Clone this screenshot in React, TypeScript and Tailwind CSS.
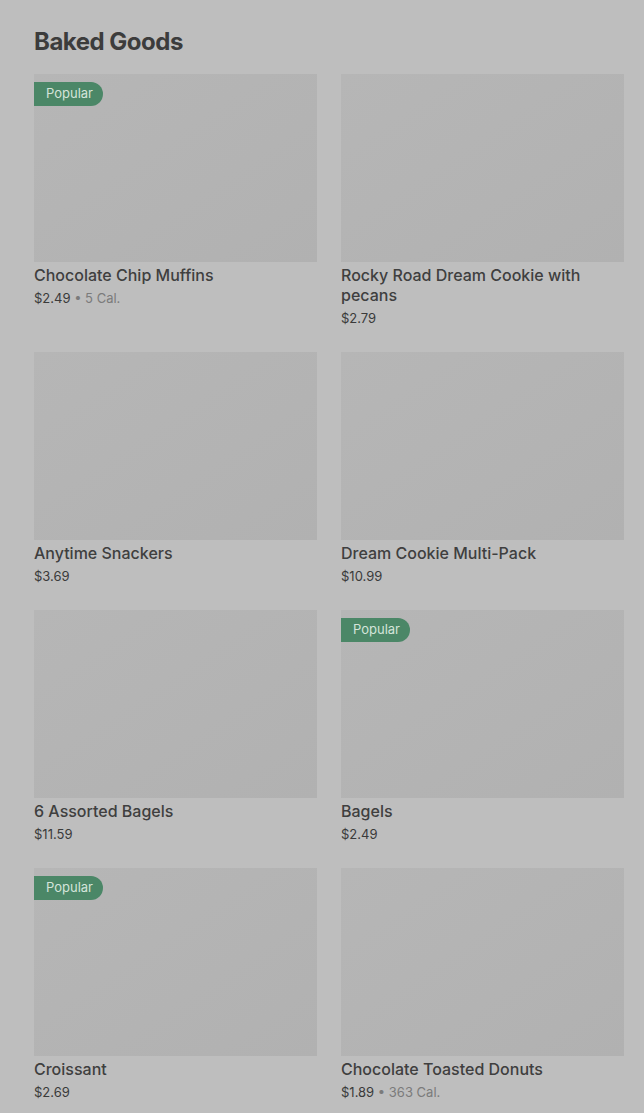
import * as React from 'react'

interface Item {
  name: string
  price: string
  cal?: string
  popular?: boolean
}

const items: Item[] = [
  { name: 'Chocolate Chip Muffins', price: '$2.49', cal: '5 Cal.', popular: true },
  { name: 'Rocky Road Dream Cookie with pecans', price: '$2.79' },
  { name: 'Anytime Snackers', price: '$3.69' },
  { name: 'Dream Cookie Multi-Pack', price: '$10.99' },
  { name: '6 Assorted Bagels', price: '$11.59' },
  { name: 'Bagels', price: '$2.49', popular: true },
  { name: 'Croissant', price: '$2.69', popular: true },
  { name: 'Chocolate Toasted Donuts', price: '$1.89', cal: '363 Cal.' },
]

const ItemCard: React.FC<{ item: Item }> = ({ item }) => (
  <div className="flex flex-col">
    <div className="relative h-[188px] bg-gradient-to-br from-[#b6b6b6] to-[#b1b1b1]">
      {item.popular && (
        <span className="absolute left-0 top-2 flex h-6 items-center rounded-r-full bg-[#4b8767] pl-3 pr-[10px] text-[13px] text-[#d4e4da]">
          Popular
        </span>
      )}
    </div>
    <div className="mt-[3px] text-[16px] font-medium leading-5 text-[#3f3f3f]">{item.name}</div>
    <div className="mt-[3px] text-[13px] leading-5 text-[#3a3a3a]">
      {item.price}
      {item.cal && (
        <span className="text-[#7b7b7b]">
          {' • '}
          {item.cal}
        </span>
      )}
    </div>
  </div>
)

export default function App() {
  return (
    <div className="min-h-[1113px] bg-[#bebebe] pl-[34px] pr-5 pt-[26px] font-['Inter',sans-serif]">
      <h2 className="text-[24px] font-bold leading-8 tracking-[-0.5px] text-[#3c3c3c]">Baked Goods</h2>
      <div className="mt-4 grid grid-cols-2 gap-x-6 gap-y-6">
        {items.map(item => (
          <ItemCard key={item.name} item={item} />
        ))}
      </div>
    </div>
  )
}
